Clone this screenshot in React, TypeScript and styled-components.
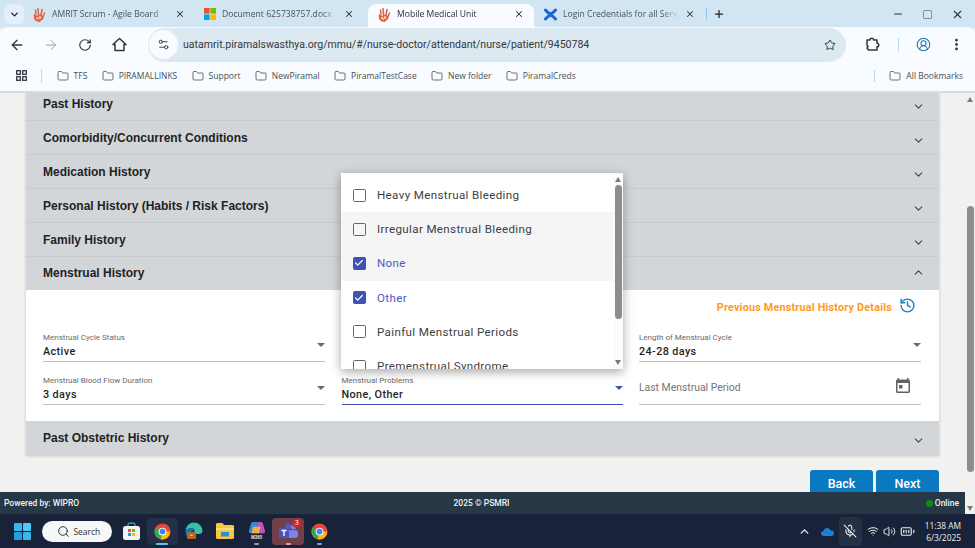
import styled, { createGlobalStyle } from 'styled-components'
import {
  ArrowLeft,
  ArrowRight,
  BatteryFull,
  Check,
  ChevronDown,
  ChevronUp,
  CircleUserRound,
  Folder,
  History,
  MicOff,
  Minus,
  MoreVertical,
  Plus,
  RotateCw,
  Search,
  Settings2,
  Star,
  Volume2,
  Wifi,
  X,
} from 'lucide-react'

const GlobalStyle = createGlobalStyle`
  html, body { margin: 0; padding: 0; width: 975px; height: 548px; overflow: hidden; }
  body { font-family: Roboto, "Liberation Sans", sans-serif; background: #f1f1f0; }
`

function AmritIcon() {
  return (
    <svg width="13" height="15" viewBox="0 0 13 15" fill="none" strokeLinecap="round">
      <path d="M6.500 14C3 13.500 1.500 11 1.800 8.500L3.500 9.500" stroke="#e2603f" strokeWidth="2" />
      <path d="M3 7 2.500 3M5.500 7.500 5 1.500M8 8 9 2.500M10 9.500l1.500-3.500" stroke="#e2603f" strokeWidth="1.500" />
      <path d="M6.500 14c2.500-.5 4.500-2 4-4.500-1.500-2-5-2.500-6.500-.5 1 2 2 3.500 2.500 5z" fill="#e2603f" />
      <circle cx="7" cy="10.500" r="1.300" fill="#f8d9cf" />
    </svg>
  )
}

function MicrosoftIcon() {
  return (
    <svg width="12" height="12" viewBox="0 0 12 12">
      <rect width="5.600" height="5.600" fill="#f25022" />
      <rect x="6.400" width="5.600" height="5.600" fill="#7fba00" />
      <rect y="6.400" width="5.600" height="5.600" fill="#00a4ef" />
      <rect x="6.400" y="6.400" width="5.600" height="5.600" fill="#ffb900" />
    </svg>
  )
}

function ConfluenceIcon() {
  return (
    <svg width="13" height="13" viewBox="0 0 13 13">
      <path d="M1.500 2c2.300 2.600 3.700 3.800 5 3.800S9.200 4.600 11.500 2M1.500 11c2.300-2.600 3.700-3.800 5-3.800s2.700 1.200 5 3.800" fill="none" stroke="#1868db" strokeWidth="3" strokeLinecap="round" />
    </svg>
  )
}

function ChromeIcon() {
  return (
    <svg width="17" height="17" viewBox="0 0 18 18">
      <circle cx="9" cy="9" r="8.500" fill="#e8453c" />
      <path d="M9 9 1.600 4.800A8.500 8.500 0 0 0 5 16.500L9 17.500z" fill="#34a853" />
      <path d="M9 9h8.200A8.500 8.500 0 0 1 7 17.300z" fill="#fbbc05" />
      <circle cx="9" cy="9" r="4.100" fill="#fff" />
      <circle cx="9" cy="9" r="3.100" fill="#4285f4" />
    </svg>
  )
}

function WindowsIcon() {
  return (
    <svg width="17" height="17" viewBox="0 0 17 17">
      <rect width="8" height="8" rx="1" fill="#38b6ee" />
      <rect x="9" width="8" height="8" rx="1" fill="#54c8f5" />
      <rect y="9" width="8" height="8" rx="1" fill="#1f9fe4" />
      <rect x="9" y="9" width="8" height="8" rx="1" fill="#38b6ee" />
    </svg>
  )
}

function StoreIcon() {
  return (
    <svg width="17" height="18" viewBox="0 0 17 18">
      <path d="M5 4V2.500C5 1.500 6 1 8.500 1S12 1.500 12 2.500V4" fill="none" stroke="#3a9ad9" strokeWidth="1.300" />
      <rect y="4" width="17" height="14" rx="2.500" fill="#f4f4f4" />
      <rect x="5" y="7" width="3" height="3" fill="#f25022" />
      <rect x="9" y="7" width="3" height="3" fill="#7fba00" />
      <rect x="5" y="11" width="3" height="3" fill="#00a4ef" />
      <rect x="9" y="11" width="3" height="3" fill="#ffb900" />
    </svg>
  )
}

function EdgeIcon() {
  return (
    <svg width="18" height="18" viewBox="0 0 18 18">
      <path d="M.5 9a8.500 8.500 0 0 1 17 0c0 2-1.500 3-3.500 3H8c0-2.500 2-3.500 2-3.500C9 5.500 3 5.500.5 9z" fill="#35c1a4" />
      <path d="M.5 9C3 5.500 9 5.500 10 8.500 6 8 4 11 5 17 2 15.500.5 12.500.5 9z" fill="#1573c4" />
      <rect x="2" y="10" width="9" height="7" rx="1" fill="#b5651d" />
      <rect x="5.500" y="12.500" width="2" height="1.500" fill="#f5d38a" />
    </svg>
  )
}

function FilesIcon() {
  return (
    <svg width="18" height="16" viewBox="0 0 18 16">
      <path d="M0 1.500C0 .7.7 0 1.500 0h5L8 2h8.500c.8 0 1.500.7 1.500 1.500V14.500c0 .8-.7 1.500-1.500 1.500h-15C.7 16 0 15.300 0 14.500z" fill="#f6c644" />
      <rect x="5" y="9" width="8" height="4.500" fill="#2a90d9" />
      <rect y="5" width="18" height="2" fill="#fbdd7c" />
    </svg>
  )
}

function CopilotIcon() {
  return (
    <svg width="18" height="13" viewBox="0 0 18 14">
      <path d="M5 0h5l-3 12H2C.5 12 0 11 .4 9.500L2.500 2C3 .7 3.800 0 5 0z" fill="#2d8fdc" />
      <path d="M7 12 10 0h3c1.200 0 2 .7 2.400 2l2.200 7.500c.4 1.500-.1 2.500-1.600 2.500z" fill="#c54fc0" />
      <path d="M5 5h8l-2 7H3z" fill="#f3b13c" />
    </svg>
  )
}

function TeamsIcon() {
  return (
    <svg width="19" height="17" viewBox="0 0 19 17">
      <circle cx="14.500" cy="4" r="2.500" fill="#7b83eb" />
      <rect x="8" y="7" width="11" height="8" rx="3" fill="#7b83eb" />
      <circle cx="9" cy="3.500" r="3" fill="#5059c9" />
      <rect x="0" y="5" width="10" height="10" rx="1.200" fill="#4b53bc" />
      <path d="M2.500 7.500h5M5 7.500V13" stroke="#fff" strokeWidth="1.400" />
    </svg>
  )
}

function OneDriveIcon() {
  return (
    <svg width="13" height="9" viewBox="0 0 13 9">
      <path d="M3 9C1.300 9 0 7.900 0 6.500S1 4 2.400 4C3 2 4.500 1 6 1s2.800.8 3.400 2.300C11.500 3.200 13 4.500 13 6.300 13 7.900 11.800 9 10.300 9z" fill="#1d7fd1" />
    </svg>
  )
}

function HomeGlyph() {
  return (
    <svg width="15" height="15" viewBox="0 0 15 15" fill="none" stroke="#30373d" strokeWidth="1.500" strokeLinejoin="round">
      <path d="M7.500 1.500 14 7.500h-2v6H3v-6H1z" />
    </svg>
  )
}

function ExtensionGlyph() {
  return (
    <svg width="15" height="15" viewBox="0 0 15 15" fill="none" stroke="#30373d" strokeWidth="1.500" strokeLinejoin="round">
      <path d="M2 3h3a1.800 1.800 0 0 1 3.600 0h3.400v3.200a1.800 1.800 0 0 1 0 3.600V13H3.500l-1.500-2 1-1.500L2 8z" />
    </svg>
  )
}

function GridGlyph() {
  return (
    <svg width="11" height="11" viewBox="0 0 11 11" fill="none" stroke="#30373d" strokeWidth="1.300">
      <rect x=".7" y=".7" width="3.600" height="3.600" />
      <rect x="6.700" y=".7" width="3.600" height="3.600" />
      <rect x=".7" y="6.700" width="3.600" height="3.600" />
      <rect x="6.700" y="6.700" width="3.600" height="3.600" />
    </svg>
  )
}

const tabs = [
  { title: 'AMRIT Scrum - Agile Board', icon: <AmritIcon />, width: 168, left: 5, right: 11 },
  { title: 'Document 625738757.docx', icon: <MicrosoftIcon />, width: 172, left: 8, right: 14 },
  { title: 'Mobile Medical Unit', icon: <AmritIcon />, width: 166, left: 10, right: 10, active: true },
  { title: 'Login Credentials for all Serv', icon: <ConfluenceIcon />, width: 172, left: 10, right: 11 },
]

const bookmarks = ['TFS', 'PIRAMALLINKS', 'Support', 'NewPiramal', 'PiramalTestCase', 'New folder', 'PiramalCreds']

const sections = [
  'Comorbidity/Concurrent Conditions',
  'Medication History',
  'Personal History (Habits / Risk Factors)',
  'Family History',
]

const options = [
  { label: 'Heavy Menstrual Bleeding' },
  { label: 'Irregular Menstrual Bleeding', hover: true },
  { label: 'None', hover: true, checked: true },
  { label: 'Other', checked: true },
  { label: 'Painful Menstrual Periods' },
  { label: 'Premenstrual Syndrome' },
]

export default function App() {
  return (
    <Screen>
      <GlobalStyle />
      <TabStrip>
        <TabSearch><ChevronDown size={11} strokeWidth={3} /></TabSearch>
        {tabs.map(tab => (
          <Tab key={tab.title} $width={tab.width} $left={tab.left} $right={tab.right} $active={tab.active}>
            {tab.icon}
            <TabTitle>{tab.title}</TabTitle>
            <X size={10} strokeWidth={2.500} color="#333" />
          </Tab>
        ))}
        <NewTab><Plus size={12} strokeWidth={2.500} /></NewTab>
        <WindowControls>
          <Minus size={12} />
          <Restore />
          <X size={13} />
        </WindowControls>
      </TabStrip>

      <Toolbar>
        <ToolIcon><ArrowLeft size={16} strokeWidth={2} /></ToolIcon>
        <ToolIcon $muted><ArrowRight size={16} strokeWidth={1.500} /></ToolIcon>
        <ToolIcon><RotateCw size={14} strokeWidth={2} /></ToolIcon>
        <ToolIcon><HomeGlyph /></ToolIcon>
        <Omnibox>
          <SiteInfo><Settings2 size={13} strokeWidth={1.700} /></SiteInfo>
          <Url>uatamrit.piramalswasthya.org/mmu/#/nurse-doctor/attendant/nurse/patient/9450784</Url>
          <Star size={12} strokeWidth={2} color="#30373d" />
        </Omnibox>
        <ToolbarEnd>
          <ExtensionGlyph />
          <Divider />
          <CircleUserRound size={15} strokeWidth={1.700} color="#1d76a8" />
          <MoreVertical size={15} strokeWidth={2.500} color="#30373d" />
        </ToolbarEnd>
      </Toolbar>

      <BookmarkBar>
        <GridGlyph />
        <Divider />
        {bookmarks.map(name => (
          <Bookmark key={name}><Folder size={12} strokeWidth={1.500} />{name}</Bookmark>
        ))}
        <AllBookmarks><Folder size={12} strokeWidth={1.500} />All Bookmarks</AllBookmarks>
      </BookmarkBar>

      <Viewport>
        <PageColumn>
          <Page>
            <Panel>
              <ClippedHeader>
                <SectionTitle>Past History</SectionTitle>
                <HeaderChevron><ChevronDown size={13} strokeWidth={2} /></HeaderChevron>
              </ClippedHeader>
              {sections.map(title => (
                <SectionHeader key={title}>
                  <SectionTitle>{title}</SectionTitle>
                  <HeaderChevron><ChevronDown size={13} strokeWidth={2} /></HeaderChevron>
                </SectionHeader>
              ))}
              <OpenHeader>
                <SectionTitle>Menstrual History</SectionTitle>
                <ChevronUp size={13} strokeWidth={2} color="#444" />
              </OpenHeader>
              <SectionBody>
                <PreviousRow>
                  <PreviousLink>Previous Menstrual History Details</PreviousLink>
                  <History size={17} strokeWidth={2} color="#1f7fc4" />
                </PreviousRow>
                <FormGrid>
                  <SelectField label="Menstrual Cycle Status" value="Active" />
                  <span />
                  <SelectField label="Length of Menstrual Cycle" value="24-28 days" />
                  <SelectField label="Menstrual Blood Flow Duration" value="3 days" />
                  <SelectField label="Menstrual Problems" value="None, Other" focused />
                  <DateField>
                    <DatePlaceholder>Last Menstrual Period</DatePlaceholder>
                    <CalendarGlyph width="14" height="15" viewBox="0 0 14 15">
                      <path d="M3 0v1.500h8V0h1.500v1.500C13.400 1.500 14 2.200 14 3v10.500c0 .8-.6 1.500-1.500 1.500h-11C.6 15 0 14.300 0 13.500V3c0-.8.6-1.500 1.500-1.500V0zM1.500 5v8.500h11V5z" fill="#5f6368" />
                      <rect x="3" y="7" width="3.500" height="3.500" fill="#5f6368" />
                    </CalendarGlyph>
                  </DateField>
                </FormGrid>
              </SectionBody>
              <LastHeader>
                <SectionTitle>Past Obstetric History</SectionTitle>
                <HeaderChevron><ChevronDown size={13} strokeWidth={2} /></HeaderChevron>
              </LastHeader>
            </Panel>
            <Actions>
              <ActionButton>Back</ActionButton>
              <ActionButton>Next</ActionButton>
            </Actions>
          </Page>
          <Footer>
            <span>Powered by: WIPRO</span>
            <FooterCenter>2025 © PSMRI</FooterCenter>
            <Status><StatusDot />Online</Status>
          </Footer>
        </PageColumn>

        <PageScrollbar>
          <ScrollArrow $up />
          <PageThumb />
          <ScrollArrow />
        </PageScrollbar>

        <Dropdown>
          <OptionList>
            {options.map(option => (
              <OptionRow key={option.label} $hover={option.hover}>
                <Box $checked={option.checked}>
                  {option.checked && <Check size={10} strokeWidth={3} color="#fff" />}
                </Box>
                <OptionLabel $checked={option.checked}>{option.label}</OptionLabel>
              </OptionRow>
            ))}
          </OptionList>
          <MenuScrollbar>
            <ScrollArrow $up />
            <MenuTrack><MenuThumb /></MenuTrack>
            <ScrollArrow />
          </MenuScrollbar>
        </Dropdown>
      </Viewport>

      <Taskbar>
        <TaskIcon><WindowsIcon /></TaskIcon>
        <SearchPill><Search size={13} strokeWidth={1.800} />Search</SearchPill>
        <TaskIcon><StoreIcon /></TaskIcon>
        <TaskIcon $active $dot="#5fc3ee"><ChromeIcon /></TaskIcon>
        <TaskIcon><EdgeIcon /></TaskIcon>
        <TaskIcon><FilesIcon /></TaskIcon>
        <CopilotSlot $dot="#9aa0a6">
          <CopilotIcon />
          <M365Label>M365</M365Label>
        </CopilotSlot>
        <TeamsSlot $dot="#e9a0a0">
          <TeamsIcon />
          <Badge>3</Badge>
        </TeamsSlot>
        <TaskIcon $dot="#9aa0a6"><ChromeIcon /></TaskIcon>
        <Tray>
          <ChevronUp size={13} strokeWidth={2.500} />
          <OneDriveIcon />
          <MicSlot><MicOff size={14} strokeWidth={1.800} /></MicSlot>
          <TrayCluster>
            <Wifi size={12} strokeWidth={2} />
            <Volume2 size={13} strokeWidth={1.800} />
            <BatteryFull size={15} strokeWidth={1.800} />
          </TrayCluster>
          <Clock><span>11:38 AM</span><span>6/3/2025</span></Clock>
        </Tray>
      </Taskbar>
    </Screen>
  )
}

function SelectField({ label, value, focused }: { label: string; value: string; focused?: boolean }) {
  return (
    <Field $focused={focused}>
      <FieldLabel>{label}</FieldLabel>
      <FieldValue>{value}</FieldValue>
      <FieldCaret $focused={focused} />
    </Field>
  )
}

const Screen = styled.div`
  width: 975px;
  height: 548px;
  display: flex;
  flex-direction: column;
  overflow: hidden;
  color: #222;
`

const TabStrip = styled.div`
  height: 28px;
  flex: none;
  display: flex;
  align-items: flex-end;
  padding-left: 4px;
  background: #d1e5f2;
`

const TabSearch = styled.div`
  width: 20px;
  height: 20px;
  margin: 0 4px 4px 0;
  display: flex;
  align-items: center;
  justify-content: center;
  border-radius: 6px;
  background: #e3f0f9;
  color: #222;
`

const Tab = styled.div<{ $width: number; $left: number; $right: number; $active?: boolean }>`
  width: ${p => p.$width}px;
  height: 24px;
  flex: none;
  box-sizing: border-box;
  padding: 0 ${p => p.$right}px 4px ${p => p.$left}px;
  display: flex;
  align-items: center;
  gap: 6px;
  border-radius: 8px 8px 0 0;
  background: ${p => (p.$active ? '#f8fbff' : 'transparent')};
  color: ${p => (p.$active ? '#2a2f33' : '#4d5257')};
`

const TabTitle = styled.span`
  flex: 1;
  min-width: 0;
  white-space: nowrap;
  overflow: hidden;
  font: 400 8.600px 'Open Sans', sans-serif;
  mask-image: linear-gradient(to right, #000 85%, transparent);
`

const NewTab = styled.div`
  width: 24px;
  height: 12px;
  margin-bottom: 8px;
  box-sizing: border-box;
  display: flex;
  align-items: center;
  justify-content: center;
  color: #222;
  border-left: 1px solid #8cc8ec;
`

const WindowControls = styled.div`
  margin-left: auto;
  width: 72px;
  height: 28px;
  margin-right: 11px;
  display: flex;
  align-items: center;
  justify-content: space-between;
  color: #333;
`

const Restore = styled.span`
  width: 7px;
  height: 7px;
  border: 1px solid #8a9299;
  border-radius: 1px;
`

const Toolbar = styled.div`
  height: 35px;
  flex: none;
  display: flex;
  align-items: center;
  background: #f8fbff;
  border-radius: 8px 8px 0 0;
  margin-top: -1px;
`

const ToolIcon = styled.div<{ $muted?: boolean }>`
  width: 34px;
  display: flex;
  justify-content: center;
  color: ${p => (p.$muted ? '#9da3a8' : '#30373d')};
`

const Omnibox = styled.div`
  width: 698px;
  height: 34px;
  margin-left: 12px;
  padding-right: 10px;
  box-sizing: border-box;
  display: flex;
  align-items: center;
  border-radius: 17px;
  background: #dce9f1;
`

const SiteInfo = styled.div`
  width: 29px;
  height: 29px;
  margin: 0 5px 0 1px;
  display: flex;
  align-items: center;
  justify-content: center;
  border-radius: 50%;
  background: #f8fbff;
  color: #30373d;
`

const Url = styled.span`
  flex: 1;
  font: 400 10.550px Roboto, sans-serif;
  color: #33383d;
  white-space: nowrap;
`

const ToolbarEnd = styled.div`
  flex: 1;
  display: flex;
  align-items: center;
  justify-content: space-between;
  padding: 0 11px 0 19px;
`

const Divider = styled.span`
  width: 1px;
  height: 14px;
  background: #b8dcf2;
`

const BookmarkBar = styled.div`
  height: 31px;
  flex: none;
  box-sizing: border-box;
  display: flex;
  align-items: center;
  padding: 0 12px 2px 16px;
  gap: 14.300px;
  background: #f8fbff;
  border-bottom: 2px solid #d8dcde;
`

const Bookmark = styled.span`
  display: flex;
  align-items: center;
  gap: 5px;
  font: 400 8.500px 'Open Sans', sans-serif;
  color: #4a4f54;

  svg { color: #3c4349; }
`

const AllBookmarks = styled(Bookmark)`
  margin-left: auto;
  padding-left: 14px;
  border-left: 1px solid #b8dcf2;
`

const Viewport = styled.div`
  flex: 1;
  min-height: 0;
  display: flex;
  position: relative;
  overflow: hidden;
`

const PageColumn = styled.div`
  flex: 1;
  min-width: 0;
  display: flex;
  flex-direction: column;
`

const Page = styled.main`
  flex: 1;
  min-height: 0;
  overflow: hidden;
  padding: 0 26px;
  background: #f1f1f0;
`

const Panel = styled.section`
  display: flex;
  flex-direction: column;
  box-shadow: 0 1px 3px rgba(0, 0, 0, 0.2);
`

const SectionHeader = styled.header`
  height: 34px;
  box-sizing: border-box;
  flex: none;
  display: flex;
  align-items: center;
  justify-content: space-between;
  padding: 0 14px 0 17px;
  background: #d3d6d9;
  border-bottom: 1px solid #c9cccf;
`

const ClippedHeader = styled(SectionHeader)`
  height: 28px;
  padding-bottom: 6px;
`

const OpenHeader = styled(SectionHeader)`
  height: 33px;
  border-bottom: 0;
  padding-bottom: 2px;
`

const LastHeader = styled(SectionHeader)`
  border-bottom: 0;
`

const HeaderChevron = styled.span`
  display: flex;
  padding-top: 5px;
  color: #444;
`

const SectionTitle = styled.h3`
  margin: 0;
  font: 700 12px 'Liberation Sans', Arial, sans-serif;
  color: #222;
`

const SectionBody = styled.div`
  height: 131px;
  box-sizing: border-box;
  padding: 2px 17px 0;
  background: #fff;
`

const PreviousRow = styled.div`
  height: 27px;
  display: flex;
  align-items: center;
  justify-content: flex-end;
  gap: 7px;
  padding-right: 6px;
`

const PreviousLink = styled.span`
  font: 700 10.800px Roboto, sans-serif;
  letter-spacing: 0.2px;
  color: #ff9a1c;
  padding-top: 4px;
`

const FormGrid = styled.div`
  margin-top: 9px;
  display: grid;
  grid-template-columns: 282px 281px 282px;
  column-gap: 16.500px;
  row-gap: 8.500px;
`

const Field = styled.div<{ $focused?: boolean }>`
  height: 34px;
  box-sizing: border-box;
  position: relative;
  border-bottom: ${p => (p.$focused ? '1.500px solid #3f51b5' : '1.500px solid #bdbfc1')};
`

const FieldLabel = styled.div`
  font: 400 8px/11px Roboto, sans-serif;
  color: #6a6a6a;
  padding-top: 4px;
`

const FieldValue = styled.div`
  font: 500 10.800px/15px Roboto, sans-serif;
  letter-spacing: 0.4px;
  color: #1f1f1f;
  padding-top: 1px;
`

const FieldCaret = styled.span<{ $focused?: boolean }>`
  position: absolute;
  right: 0;
  top: 15px;
  border: 4px solid transparent;
  border-bottom: 0;
  border-top-color: ${p => (p.$focused ? '#3f51b5' : '#6a6a6a')};
`

const DateField = styled.div`
  height: 34px;
  box-sizing: border-box;
  display: flex;
  align-items: center;
  justify-content: space-between;
  padding: 0 11px 0 0;
  border-bottom: 1.500px solid #bdbfc1;
`

const CalendarGlyph = styled.svg`
  margin-bottom: 4px;
`

const DatePlaceholder = styled.span`
  font: 400 10.400px Roboto, sans-serif;
  color: #757575;
`

const Actions = styled.div`
  display: flex;
  justify-content: flex-end;
  gap: 3px;
  padding-top: 15px;
`

const ActionButton = styled.button`
  width: 63px;
  height: 36px;
  border: 0;
  border-radius: 3px;
  background: #0a79bf;
  color: #fff;
  font: 500 12.500px Roboto, sans-serif;
  padding: 0 0 10px;
`

const PageScrollbar = styled.div`
  width: 10px;
  flex: none;
  box-sizing: border-box;
  display: flex;
  flex-direction: column;
  align-items: center;
  justify-content: space-between;
  padding: 4px 0 3px;
  background: #f1f1f0;
  position: relative;
`

const PageThumb = styled.div`
  position: absolute;
  top: 113px;
  left: 2px;
  width: 7px;
  height: 266px;
  border-radius: 4px;
  background: #8d8d8d;
`

const ScrollArrow = styled.span<{ $up?: boolean }>`
  width: 0;
  height: 0;
  border-left: 3.500px solid transparent;
  border-right: 3.500px solid transparent;
  ${p => (p.$up ? 'border-bottom: 5px solid #7a7a7a;' : 'border-top: 5px solid #7a7a7a;')}
`

const Dropdown = styled.div`
  position: absolute;
  left: 341px;
  top: 80px;
  width: 282px;
  height: 196px;
  display: flex;
  overflow: hidden;
  background: #fff;
  box-shadow: 0 3px 10px rgba(0, 0, 0, 0.35);
`

const OptionList = styled.div`
  flex: 1;
  padding-top: 5px;
`

const OptionRow = styled.div<{ $hover?: boolean }>`
  height: 34.200px;
  display: flex;
  align-items: center;
  gap: 11.500px;
  padding-left: 11.500px;
  background: ${p => (p.$hover ? '#f5f5f5' : 'transparent')};
`

const Box = styled.span<{ $checked?: boolean }>`
  width: 13px;
  height: 13px;
  box-sizing: border-box;
  flex: none;
  display: flex;
  align-items: center;
  justify-content: center;
  border-radius: 1.500px;
  border: ${p => (p.$checked ? '1px solid #3f51b5' : '1.300px solid #666')};
  background: ${p => (p.$checked ? '#3f51b5' : 'transparent')};
`

const OptionLabel = styled.span<{ $checked?: boolean }>`
  font: 400 11.600px Roboto, sans-serif;
  letter-spacing: 0.35px;
  color: ${p => (p.$checked ? '#4a5bc0' : '#3e3e3e')};
`

const MenuScrollbar = styled.div`
  width: 10px;
  flex: none;
  display: flex;
  flex-direction: column;
  align-items: center;
  justify-content: space-between;
  padding: 4px 0;
  box-sizing: border-box;
  background: #fbfbfb;
`

const MenuTrack = styled.div`
  flex: 1;
  width: 100%;
  padding: 3px 1.500px 0;
  box-sizing: border-box;
`

const MenuThumb = styled.div`
  height: 134px;
  border-radius: 4px;
  background: #8d8d8d;
`

const Footer = styled.footer`
  height: 22px;
  flex: none;
  display: grid;
  grid-template-columns: 1fr 1fr 1fr;
  align-items: center;
  padding: 0 6px 0 4px;
  background: #263745;
  color: #f1f4f6;
  font: 500 8.500px Roboto, sans-serif;
`

const FooterCenter = styled.span`
  text-align: center;
`

const Status = styled.span`
  display: flex;
  align-items: center;
  justify-content: flex-end;
  gap: 2px;
`

const StatusDot = styled.span`
  width: 7px;
  height: 7px;
  border-radius: 50%;
  background: #0d8a1c;
`

const Taskbar = styled.div`
  height: 34px;
  flex: none;
  display: flex;
  align-items: center;
  padding-left: 7px;
  background: #182238;
`

const TaskIcon = styled.div<{ $active?: boolean; $dot?: string }>`
  width: 31.400px;
  height: 27px;
  flex: none;
  display: flex;
  align-items: center;
  justify-content: center;
  position: relative;
  border-radius: 4px;
  background: ${p => (p.$active ? '#243048' : 'transparent')};

  &::after {
    content: '';
    display: ${p => (p.$dot ? 'block' : 'none')};
    position: absolute;
    bottom: 0;
    left: 50%;
    width: ${p => (p.$active ? '12px' : '5px')};
    height: 2px;
    margin-left: ${p => (p.$active ? '-6px' : '-2.500px')};
    border-radius: 1px;
    background: ${p => p.$dot};
  }
`

const TeamsSlot = styled(TaskIcon)`
  background: #6f4048;
`

const CopilotSlot = styled(TaskIcon)`
  flex-direction: column;
  justify-content: flex-start;
  padding-top: 4px;
  box-sizing: border-box;
`

const M365Label = styled.span`
  font: 700 4.500px/5px 'Liberation Sans', sans-serif;
  color: #e8e8e8;
`

const Badge = styled.span`
  position: absolute;
  top: 0;
  right: 2px;
  width: 10px;
  height: 10px;
  display: flex;
  align-items: center;
  justify-content: center;
  border-radius: 50%;
  background: #c4262e;
  color: #fff;
  font: 500 7px 'Open Sans', sans-serif;
`

const SearchPill = styled.div`
  width: 70px;
  height: 21px;
  margin: 0 3px 0 4px;
  flex: none;
  box-sizing: border-box;
  padding-left: 15px;
  display: flex;
  align-items: center;
  gap: 3px;
  border-radius: 11px;
  background: #f6f7f8;
  color: #333;
  font: 400 8.500px 'Open Sans', sans-serif;
`

const Tray = styled.div`
  margin-left: auto;
  display: flex;
  align-items: center;
  gap: 10px;
  padding-right: 14px;
  color: #eceff2;
`

const TrayCluster = styled.div`
  display: flex;
  align-items: center;
  gap: 4px;
`

const MicSlot = styled.div`
  width: 23px;
  height: 29px;
  display: flex;
  align-items: center;
  justify-content: center;
  border-radius: 4px;
  background: #262f44;
  margin: 0 -5px;
`

const Clock = styled.div`
  display: flex;
  flex-direction: column;
  align-items: flex-end;
  gap: 1px;
  font: 400 8.400px/11px 'Open Sans', sans-serif;
`
